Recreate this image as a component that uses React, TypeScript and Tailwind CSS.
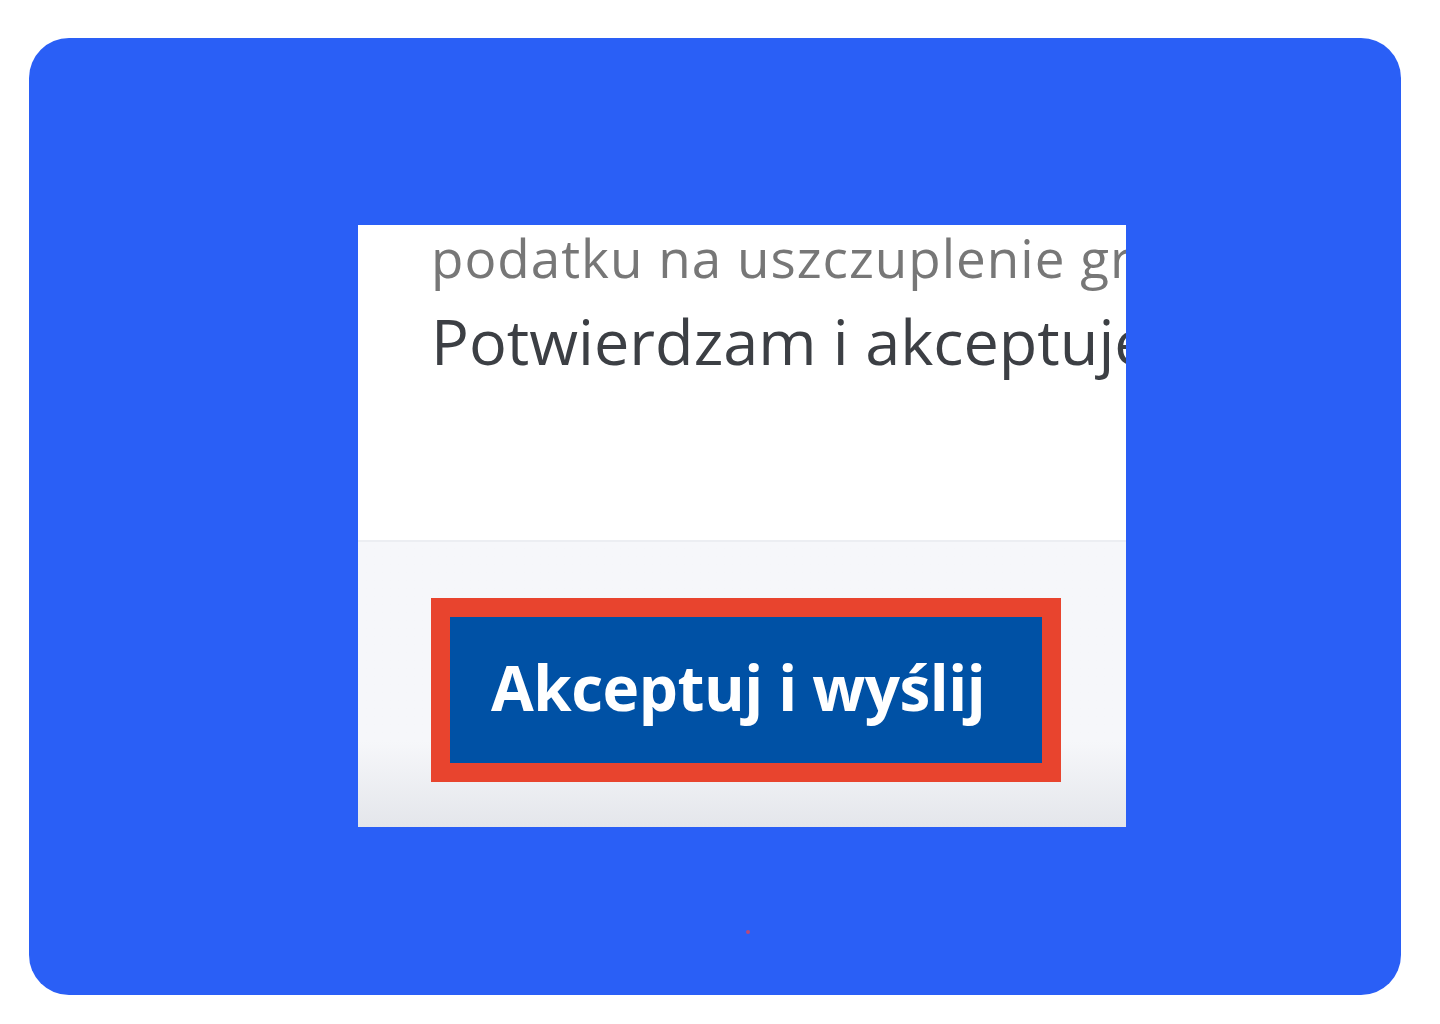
export default function App() {
  return (
    <div className="w-[1440px] h-[1024px] bg-white relative" style={{ fontFamily: '"Open Sans", "Noto Sans", sans-serif' }}>
      <div className="absolute left-[29px] top-[38px] w-[1372px] h-[957px] rounded-[40px] bg-[#2a5ff6] flex flex-col">
        <div className="mt-[187px] ml-[329px] w-[768px] h-[602px] bg-white flex flex-col overflow-hidden">
          <div className="h-[315px] pl-[73px] pt-[2px] whitespace-nowrap">
            <div className="text-[53px] leading-[62px] tracking-[1px] text-[#777777]">podatku na uszczuplenie granic</div>
            <div className="text-[63px] leading-[80px] text-[#3c3f44] mt-[12px]">Potwierdzam i akceptuję</div>
          </div>
          <div className="h-[2px] bg-[#eceef2]" />
          <div className="flex-1 bg-gradient-to-b from-[#f6f7fa] from-70% to-[#e4e6eb] pl-[73px] pt-[56px]">
            <div className="inline-flex border-[19px] border-[#e8442e] w-[630px] h-[184px]">
              <div className="flex-1 bg-[#0051a5] flex items-center pl-[41px] text-white font-bold text-[62px] tracking-[-0.5px] leading-none pb-[6px]">
                Akceptuj i wyślij
              </div>
            </div>
          </div>
        </div>
        <div className="absolute left-[717px] top-[892px] w-[4px] h-[4px] rounded-full bg-[#b84a7a]" />
      </div>
    </div>
  );
}
